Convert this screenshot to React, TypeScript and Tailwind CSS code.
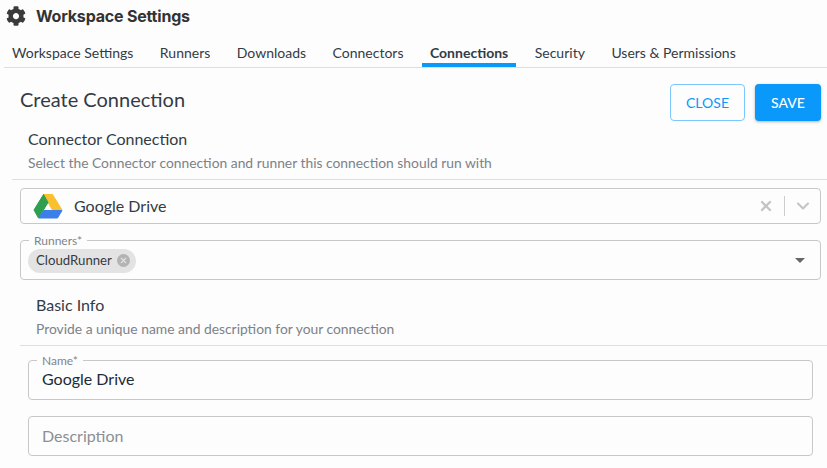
import { ChevronDown, X } from "lucide-react";

const tabs = [
  "Workspace Settings",
  "Runners",
  "Downloads",
  "Connectors",
  "Connections",
  "Security",
  "Users & Permissions",
];

function GearIcon() {
  return (
    <svg viewBox="0 0 512 512" className="w-[20px] h-[20px] text-[#3a3a3a]" fill="currentColor">
      <path d="M487.4 315.7l-42.6-24.6c4.3-23.2 4.3-47 0-70.2l42.6-24.6c4.9-2.8 7.1-8.6 5.500-14-11.1-35.6-30-67.8-54.7-94.6-3.8-4.1-10-5.1-14.8-2.3L380.8 110c-17.9-15.4-38.5-27.3-60.8-35.1V25.8c0-5.6-3.9-10.5-9.4-11.700-36.7-8.2-74.3-7.8-109.2 0-5.500 1.2-9.4 6.1-9.4 11.700V75c-22.2 7.9-42.8 19.8-60.8 35.1L88.7 85.500c-4.9-2.8-11-1.9-14.8 2.3-24.7 26.7-43.6 58.9-54.7 94.6-1.7 5.400.6 11.2 5.500 14L67.3 221c-4.3 23.2-4.3 47 0 70.2l-42.6 24.6c-4.9 2.8-7.1 8.6-5.500 14 11.1 35.6 30 67.8 54.7 94.6 3.8 4.1 10 5.1 14.8 2.3l42.6-24.6c17.9 15.4 38.5 27.3 60.8 35.1v49.2c0 5.6 3.9 10.5 9.4 11.700 36.7 8.2 74.3 7.8 109.2 0 5.500-1.2 9.4-6.1 9.4-11.700v-49.2c22.2-7.9 42.8-19.8 60.8-35.1l42.6 24.6c4.9 2.8 11 1.9 14.8-2.3 24.7-26.7 43.6-58.9 54.7-94.6 1.500-5.500-.7-11.3-5.6-14.1zM256 336c-44.1 0-80-35.9-80-80s35.9-80 80-80 80 35.9 80 80-35.9 80-80 80z" />
    </svg>
  );
}

function DriveLogo() {
  return (
    <svg viewBox="0 0 30 26" className="w-[30px] h-[26px]" strokeLinejoin="round">
      <path d="M10.500 1.500h9l9.500 15.500h-9.500z" fill="#fbc02d" stroke="#fbc02d" />
      <path d="M10.500 1.500l4.500 8-9.500 15.500-4.500-8z" fill="#2e9e50" stroke="#2e9e50" />
      <path d="M10.500 17.500h18.500l-4.500 7.500h-19z" fill="#3d7fe8" stroke="#3d7fe8" />
    </svg>
  );
}

function SectionHead({ title, sub, inset, lineFrom }: { title: string; sub: string; inset: string; lineFrom: string }) {
  return (
    <div>
      <div className={inset}>
        <h3 className="text-[16px] leading-[20px] text-[#333b45]">{title}</h3>
        <p className="mt-[4px] text-[13.85px] leading-[20px] text-[#7c8288]">{sub}</p>
      </div>
      <div className={`mt-[6px] h-px bg-[#dedede] ${lineFrom}`} />
    </div>
  );
}

function FloatLabel({ text, left }: { text: string; left: string }) {
  return (
    <span className={`absolute -top-[7px] ${left} bg-[#fdfdfd] px-[5px] text-[12px] leading-[13px] text-[#80858a]`}>
      {text}
    </span>
  );
}

export default function App() {
  return (
    <div className="h-[468px] overflow-hidden bg-[#fdfdfd] font-['Lato','Liberation_Sans',sans-serif] text-[#333b45]">
      <header className="flex items-center gap-[10px] pl-[6px] h-[31px]">
        <GearIcon />
        <h1 className="font-['Inter',sans-serif] text-[16px] font-bold text-[#333] tracking-[-0.2px]">Workspace Settings</h1>
      </header>

      <nav className="ml-[4px] mt-[9px] flex gap-[10.5px] h-[28px] border-b border-[#dddddd]">
        {tabs.map((t) =>
          t === "Connections" ? (
            <div key={t} className="px-[8px] h-[27px] border-b-[4px] border-[#0a98fb] text-[14px] font-bold leading-[26px] text-[#333b45]">
              {t}
            </div>
          ) : (
            <div key={t} className="px-[8px] h-[27px] text-[14px] leading-[26px] text-[#333b45]">
              {t}
            </div>
          )
        )}
      </nav>

      <div className="mt-[16px] flex items-center justify-between pl-[20px] pr-[6px]">
        <h2 className="text-[20px] leading-[32px] text-[#333b45] -mt-[8px]">Create Connection</h2>
        <div className="flex gap-[10px]">
          <button className="h-[37px] w-[75px] rounded-[4px] border border-[#7cc8fc] text-[14px] text-[#0a98fb]">CLOSE</button>
          <button className="h-[37px] w-[66px] rounded-[4px] bg-[#0a98fb] text-[14px] font-medium text-white shadow-[0_1px_3px_rgba(0,0,0,0.3)]">SAVE</button>
        </div>
      </div>

      <div className="mt-[8px]">
        <SectionHead
          title="Connector Connection"
          sub="Select the Connector connection and runner this connection should run with"
          inset="pl-[28px]"
          lineFrom="ml-[12px]"
        />
      </div>

      <div className="mx-[6px] ml-[20px] mt-[8px] flex h-[36px] items-center rounded-[4px] border border-[#c8c8c8] pl-[12px] pr-[7px]">
        <DriveLogo />
        <span className="ml-[11px] flex-1 text-[16px] text-[#333b45]">Google Drive</span>
        <X size={16} strokeWidth={3.5} className="text-[#c4c4c4]" />
        <span className="ml-[10px] mr-[8px] h-[20px] w-px bg-[#cccccc]" />
        <ChevronDown size={20} strokeWidth={2.5} className="text-[#c4c4c4]" />
      </div>

      <div className="relative mr-[6px] ml-[20px] mt-[16px] flex h-[40px] items-center rounded-[4px] border border-[#c8c8c8] pl-[7px] pr-[15px]">
        <FloatLabel text="Runners*" left="left-[8px]" />
        <div className="flex h-[24px] items-center gap-[5px] rounded-full bg-[#e3e3e3] pl-[8px] pr-[6px] mt-[1px]">
          <span className="text-[13.2px] text-[#333b45]">CloudRunner</span>
          <span className="flex h-[13px] w-[13px] items-center justify-center rounded-full bg-[#b3b3b3]">
            <X size={9} strokeWidth={3} className="text-[#e3e3e3]" />
          </span>
        </div>
        <span className="ml-auto h-0 w-0 border-x-[5px] border-t-[5px] border-x-transparent border-t-[#666666]" />
      </div>

      <div className="mt-[15px]">
        <SectionHead
          title="Basic Info"
          sub="Provide a unique name and description for your connection"
          inset="pl-[36px]"
          lineFrom="ml-[20px]"
        />
      </div>

      <div className="relative ml-[28px] mr-[14px] mt-[14px] flex h-[40px] items-center rounded-[4px] border border-[#c8c8c8] pl-[13px]">
        <FloatLabel text="Name*" left="left-[8px]" />
        <span className="text-[16px] text-[#222b35] -mt-[2px]">Google Drive</span>
      </div>

      <div className="ml-[28px] mr-[14px] mt-[16px] flex h-[40px] items-center rounded-[4px] border border-[#c8c8c8] pl-[13px]">
        <span className="text-[16px] text-[#8a8f94]">Description</span>
      </div>
    </div>
  );
}
